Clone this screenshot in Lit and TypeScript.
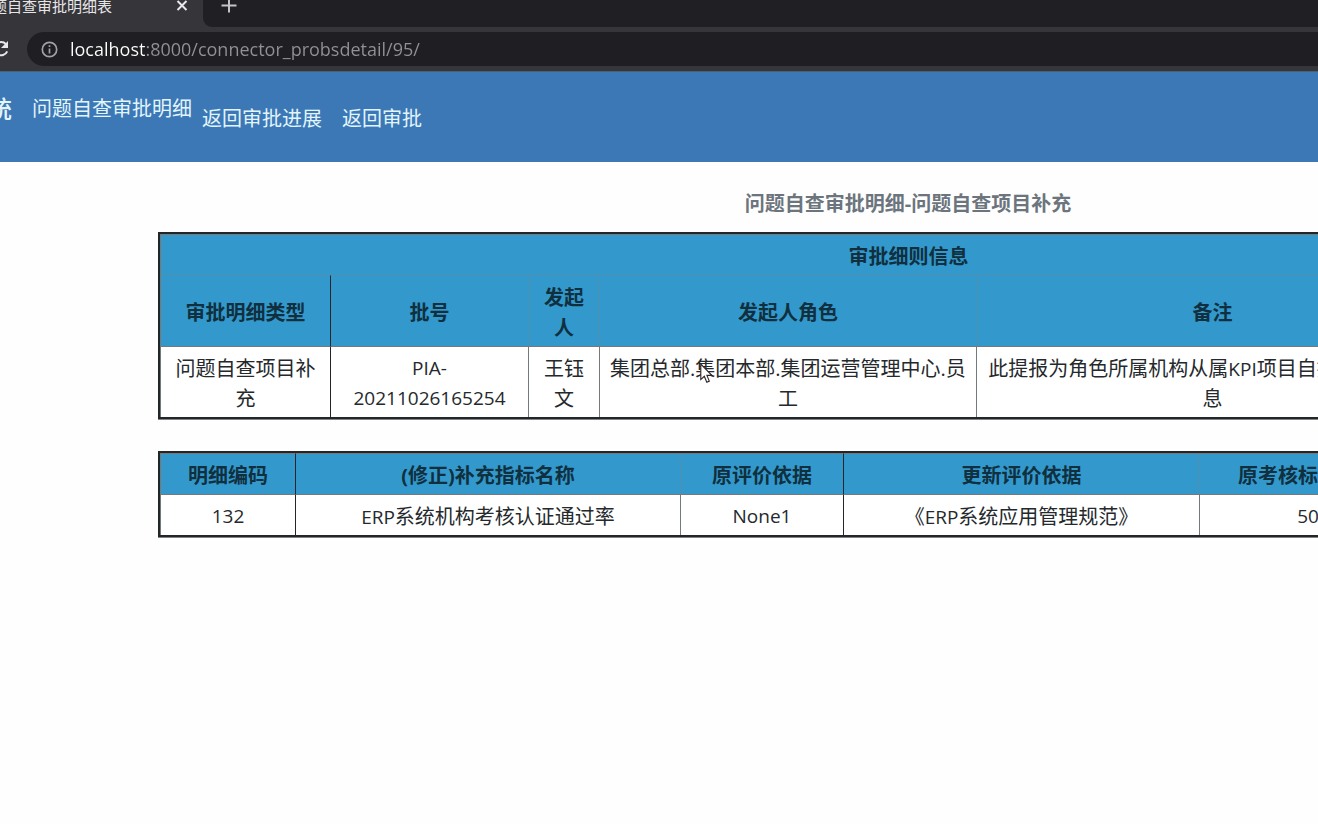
import { LitElement, html, css } from "lit";
import { customElement } from "lit/decorators.js";

@customElement("browser-chrome")
class BrowserChrome extends LitElement {
  static styles = css`
    :host {
      display: block;
      background: #36353a;
      border-bottom: 1px solid #4a6076;
      font-family: "Open Sans", "Noto Sans CJK SC", sans-serif;
    }
    .tabs {
      display: flex;
      height: 27px;
    }
    .tab {
      display: flex;
      align-items: flex-start;
      width: 203px;
      flex: none;
    }
    .title {
      display: flex;
      justify-content: flex-end;
      width: 112px;
      overflow: hidden;
      white-space: nowrap;
      color: #e6e6e8;
      font-size: 15px;
      line-height: 12px;
      height: 20px;
    }
    button {
      display: flex;
      padding: 0;
      border: 0;
      background: none;
      color: #e8e8ea;
    }
    .close {
      margin-left: 63px;
    }
    .strip {
      flex: 1;
      padding-left: 18px;
      background: #202024;
      border-bottom-left-radius: 9px;
    }
    .strip button {
      color: #c4c4c7;
    }
    .bar {
      display: flex;
      align-items: center;
      gap: 17px;
      padding: 5px 0;
    }
    .reload {
      justify-content: flex-end;
      width: 10px;
      overflow: hidden;
    }
    .reload svg {
      flex: none;
    }
    .address {
      display: flex;
      flex: 1;
      align-items: center;
      gap: 12px;
      height: 34px;
      padding-left: 14px;
      border-radius: 17px 0 0 17px;
      background: #1f1f23;
    }
    input {
      flex: 1;
      min-width: 0;
      padding: 0;
      border: 0;
      outline: 0;
      font: 18px/30px "Open Sans", sans-serif;
      color: transparent;
      background: linear-gradient(90deg, #fff 75px, #929295 75px);
      -webkit-background-clip: text;
      background-clip: text;
    }
  `;

  render() {
    return html`
      <div class="tabs">
        <div class="tab">
          <span class="title">问题自查审批明细表</span>
          <button class="close" aria-label="关闭标签页">
            <svg width="14" height="14" viewBox="0 0 14 14" stroke="currentColor" stroke-width="2">
              <path d="M2.5 1 11.5 10M11.5 1 2.5 10" />
            </svg>
          </button>
        </div>
        <div class="strip">
          <button aria-label="新标签页">
            <svg width="16" height="14" viewBox="0 0 16 14" stroke="currentColor" stroke-width="2">
              <path d="M8 -2V12.5M.5 5.5H15.5" />
            </svg>
          </button>
        </div>
      </div>
      <div class="bar">
        <button class="reload" aria-label="重新加载">
          <svg width="18" height="18" viewBox="0 0 18 18" fill="none" stroke="currentColor" stroke-width="2">
            <path d="M14 4.2A6.6 6.6 0 1 0 15.2 11.3" />
            <path d="M16 1V8H9Z" fill="currentColor" stroke="none" />
          </svg>
        </button>
        <div class="address">
          <svg width="17" height="17" viewBox="0 0 17 17" fill="none" stroke="#a2a2a5" stroke-width="1.7">
            <circle cx="8.5" cy="8.5" r="7.2" />
            <path d="M8.5 7.5V12.5M8.5 4.3V6" />
          </svg>
          <input aria-label="地址" value="localhost:8000/connector_probsdetail/95/" />
        </div>
      </div>
    `;
  }
}

@customElement("app-root")
class AppRoot extends LitElement {
  static styles = css`
    :host {
      display: block;
      position: relative;
      min-height: 100vh;
      overflow: hidden;
      background: #fefefe;
      color: #25292c;
      font: 20px/30px "Open Sans", "Noto Sans CJK SC", sans-serif;
    }
    nav {
      display: flex;
      align-items: flex-start;
      height: 68px;
      padding-top: 22px;
      background: #3c78b5;
      color: #e2f5fc;
      white-space: nowrap;
    }
    .brand {
      display: flex;
      justify-content: flex-end;
      width: 12px;
      margin-right: 20px;
      overflow: hidden;
      font-size: 24px;
      font-weight: 500;
    }
    .links {
      display: flex;
      gap: 20px;
      padding: 10px;
    }
    a {
      color: inherit;
      text-decoration: none;
    }
    main {
      width: calc(100% + 182px);
      margin-left: 158px;
      padding-top: 27px;
    }
    h1 {
      margin: 0 0 13px;
      font-size: 20px;
      font-weight: 700;
      line-height: 30px;
      text-align: center;
      color: #6c757d;
    }
    table {
      width: 100%;
      margin-bottom: 32px;
      table-layout: fixed;
      border: 2px solid #222627;
      border-spacing: 0;
      box-shadow: 0 1px 0 #808486;
      text-align: center;
    }
    th,
    td {
      padding: 7px 9px 3px;
      border: 0 solid #747a7c;
      border-width: 1px 0 0 1px;
    }
    th {
      background: #3399cc;
      border-color: #4d90b0;
      color: #10303f;
      font-weight: 700;
    }
    td {
      background: #fff;
    }
    tr > :first-child {
      border-left-color: #747a7c;
    }
    tr:first-child > th {
      border-top-color: #747a7c;
    }
    tr > .strong {
      border-left-color: #222627;
    }
    .code {
      padding: 6px 9px 4px;
      font-size: 19px;
    }
    .latin {
      font-size: 19px;
    }
    .c71 { width: 71px; }
    .c135 { width: 135px; }
    .c163 { width: 163px; }
    .c170 { width: 170px; }
    .c198 { width: 198px; }
    .c217 { width: 217px; }
    .c356 { width: 356px; }
    .c377 { width: 377px; }
    .c385 { width: 385px; }
    .c472 { width: 472px; }
    .pointer {
      position: absolute;
      left: 700px;
      top: 363px;
    }
  `;

  render() {
    return html`
      <browser-chrome></browser-chrome>
      <nav>
        <span class="brand">系统</span>
        <a href="#detail">问题自查审批明细</a>
        <div class="links">
          <a href="#progress">返回审批进展</a>
          <a href="#approval">返回审批</a>
        </div>
      </nav>
      <main>
        <h1>问题自查审批明细-问题自查项目补充</h1>
        <table>
          <colgroup>
            <col class="c170" /><col class="c198" /><col class="c71" />
            <col class="c377" /><col class="c472" /><col />
          </colgroup>
          <thead>
            <tr><th colspan="6">审批细则信息</th></tr>
            <tr>
              <th>审批明细类型</th>
              <th class="strong">批号</th>
              <th>发起人</th>
              <th>发起人角色</th>
              <th>备注</th>
              <th></th>
            </tr>
          </thead>
          <tbody>
            <tr>
              <td>问题自查项目补充</td>
              <td class="strong code">PIA-20211026165254</td>
              <td>王钰文</td>
              <td>集团总部.集团本部.集团运营管理中心.员工</td>
              <td>此提报为角色所属机构从属<span class="latin">KPI</span>项目自提报补充类信息</td>
              <td></td>
            </tr>
          </tbody>
        </table>
        <table>
          <colgroup>
            <col class="c135" /><col class="c385" /><col class="c163" />
            <col class="c356" /><col class="c217" /><col />
          </colgroup>
          <thead>
            <tr>
              <th>明细编码</th>
              <th class="strong">(修正)补充指标名称</th>
              <th>原评价依据</th>
              <th class="strong">更新评价依据</th>
              <th>原考核标准分值</th>
              <th></th>
            </tr>
          </thead>
          <tbody>
            <tr>
              <td class="code">132</td>
              <td class="strong"><span class="latin">ERP</span>系统机构考核认证通过率</td>
              <td class="code">None1</td>
              <td class="strong">《<span class="latin">ERP</span>系统应用管理规范》</td>
              <td class="code">50</td>
              <td></td>
            </tr>
          </tbody>
        </table>
      </main>
      <svg class="pointer" width="13" height="21" viewBox="0 0 13 21" fill="#fff" stroke="#2a2226" stroke-width="1.1">
        <path d="M.8 1V16.6L4.3 13.3 6.8 19.2 9.3 18.1 6.9 12.4H11.8Z" />
      </svg>
    `;
  }
}
